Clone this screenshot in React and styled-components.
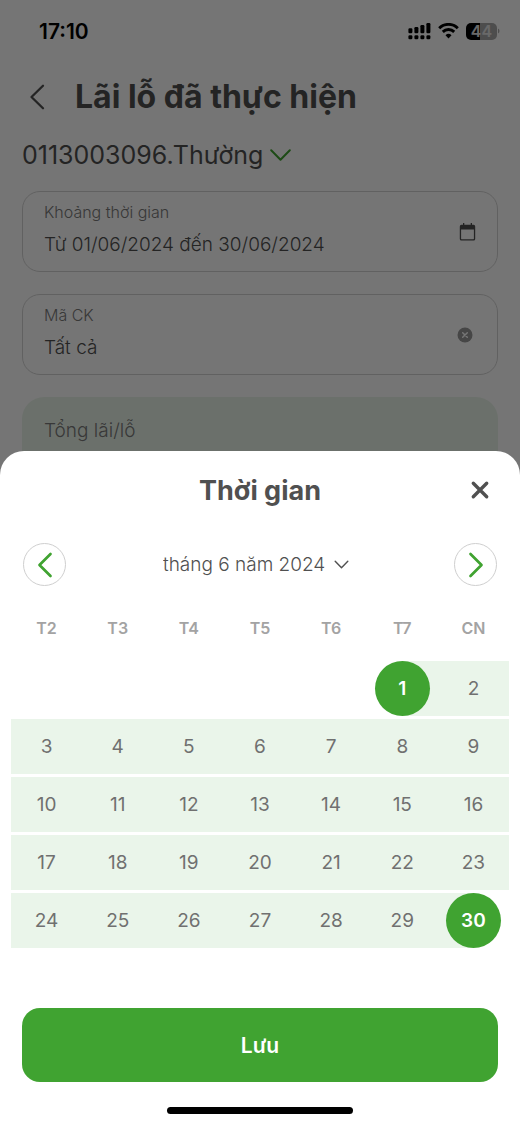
import React, { useState } from "react";
import styled, { createGlobalStyle, css, ThemeProvider } from "styled-components";

const theme = {
  colors: {
    green: "#40a331",
    range: "#eaf5ea",
    text: "#505050",
    muted: "#7a7a7a",
    weekday: "#a3a3a3",
    border: "#d4d4d4",
  },
};

const GlobalStyle = createGlobalStyle`
  *, *::before, *::after {
    box-sizing: border-box;
  }
  body {
    margin: 0;
    background: #fff;
    color: #505050;
    font-family: Inter, "Liberation Sans", sans-serif;
  }
  button, input, select {
    margin: 0;
    padding: 0;
    border: none;
    background: none;
    color: inherit;
    font: inherit;
    outline: none;
  }
  button, select {
    cursor: pointer;
  }
  svg {
    display: block;
    flex-shrink: 0;
  }
`;

const Page = styled.div`
  min-height: 100vh;
`;

const StatusBar = styled.div`
  display: flex;
  align-items: center;
  justify-content: space-between;
  height: 62px;
  padding: 0 20px 0 39px;
  color: #000;
`;

const Time = styled.time`
  font-size: 21px;
  font-weight: 600;
`;

const StatusIcons = styled.div`
  display: flex;
  align-items: center;
  gap: 7px;
`;

const TopBar = styled.header`
  display: flex;
  align-items: center;
  gap: 28px;
  height: 70px;
  padding: 0 28px;
`;

const Title = styled.h1`
  margin: 0;
  font-size: 32px;
  font-weight: 700;
  line-height: 40px;
`;

const Content = styled.main`
  display: flex;
  flex-direction: column;
  gap: 22px;
  padding: 9px 22px 0;
`;

const AccountPicker = styled.label`
  display: flex;
  align-items: center;
  gap: 6px;
  height: 28px;
  color: ${({ theme }) => theme.colors.green};
`;

const PlainSelect = styled.select`
  appearance: none;
  color: ${({ theme }) => theme.colors.text};
  font-size: ${({ $size }) => $size}px;
  font-weight: ${({ $weight }) => $weight};
  line-height: 32px;
`;

const Field = styled.div`
  display: flex;
  align-items: center;
  justify-content: space-between;
  height: 81px;
  padding: 0 21px;
  border: 1px solid ${({ theme }) => theme.colors.border};
  border-radius: 18px;
`;

const FieldBody = styled.div`
  display: flex;
  flex: 1;
  flex-direction: column;
  gap: 11px;
  padding-bottom: 5px;
`;

const FieldLabel = styled.label`
  color: ${({ theme }) => theme.colors.muted};
  font-size: 16px;
  font-weight: 300;
  line-height: 20px;
`;

const FieldInput = styled.input`
  width: 100%;
  height: 24px;
  font-size: 19px;
  font-weight: 300;
`;

const IconButton = styled.button`
  display: flex;
  align-items: center;
  justify-content: center;
`;

const Summary = styled.section`
  min-height: 140px;
  padding: 21px 22px;
  border-radius: 22px;
  background: ${({ theme }) => theme.colors.range};
  color: ${({ theme }) => theme.colors.muted};
  font-size: 19px;
  font-weight: 300;
  line-height: 26px;
`;

const Backdrop = styled.div`
  position: fixed;
  inset: 0;
  display: flex;
  align-items: flex-end;
  background: rgba(0, 0, 0, 0.54);
`;

const Sheet = styled.section`
  width: 100%;
  border-radius: 24px 24px 0 0;
  background: #fff;
`;

const SheetHeader = styled.div`
  display: grid;
  grid-template-columns: 1fr auto 1fr;
  align-items: center;
  height: 78px;
  padding: 0 30px;
`;

const SheetTitle = styled.h2`
  grid-column: 2;
  margin: 0;
  font-size: 27px;
  font-weight: 700;
`;

const CloseButton = styled(IconButton)`
  justify-self: end;
`;

const MonthNav = styled.div`
  display: flex;
  align-items: center;
  justify-content: space-between;
  padding: 14px 23px 0;
`;

const RoundButton = styled(IconButton)`
  width: 43px;
  height: 43px;
  border: 1px solid #cfcfcf;
  border-radius: 50%;
  color: ${({ theme }) => theme.colors.green};
`;

const MonthPicker = styled.label`
  display: flex;
  align-items: center;
  gap: 8px;
  padding-right: 8px;
`;

const Calendar = styled.table`
  width: calc(100% - 22px);
  margin: 15px 11px 0;
  border-collapse: separate;
  border-spacing: 0 3px;
  table-layout: fixed;
`;

const Weekday = styled.th`
  height: 54px;
  padding: 0 0 6px;
  color: ${({ theme }) => theme.colors.weekday};
  font-size: 16px;
  font-weight: 600;
`;

const rangeFill = {
  start: css`
    background: linear-gradient(to right, transparent 50%, ${({ theme }) => theme.colors.range} 50%);
  `,
  end: css`
    background: linear-gradient(to left, transparent 50%, ${({ theme }) => theme.colors.range} 50%);
  `,
  middle: css`
    background: ${({ theme }) => theme.colors.range};
  `,
};

const DayCell = styled.td`
  height: 55px;
  padding: 0;
  text-align: center;
  ${({ $range }) => rangeFill[$range]}
`;

const Day = styled.button`
  width: 55px;
  height: 55px;
  border-radius: 50%;
  vertical-align: top;
  font-size: 19px;
  color: #707070;
  ${({ $selected }) =>
    $selected &&
    css`
      background: ${({ theme }) => theme.colors.green};
      color: #fff;
      font-weight: 600;
    `}
`;

const SheetFooter = styled.div`
  display: flex;
  flex-direction: column;
  align-items: center;
  padding: 57px 22px 11px;
`;

const SaveButton = styled.button`
  width: 100%;
  height: 74px;
  border-radius: 18px;
  background: ${({ theme }) => theme.colors.green};
  color: #fff;
  font-size: 21px;
  font-weight: 600;
`;

const HomeIndicator = styled.div`
  width: 186px;
  height: 7px;
  margin-top: 25px;
  border-radius: 4px;
  background: #000;
`;

const BatteryLevel = styled.div`
  display: flex;
  align-items: center;
`;

const BatteryBody = styled.div`
  width: 31px;
  height: 17px;
  border-radius: 5px;
  background: linear-gradient(to right, #000 45%, #a8a8a8 45%);
  color: #e4e4e4;
  font-size: 16px;
  font-weight: 600;
  line-height: 17px;
  text-align: center;
`;

const SignalIcon = () => (
  <svg width="23" height="17" viewBox="0 0 23 17" fill="currentColor">
    <rect x="0.4" y="5.2" width="4" height="5" rx="1.2" />
    <rect x="6.4" y="4" width="4" height="6.2" rx="1.2" />
    <rect x="12.4" y="2" width="4" height="8.2" rx="1.2" />
    <rect x="18.4" y="0" width="4" height="10.2" rx="1.2" />
    <rect x="0.4" y="12.2" width="4" height="4" rx="1.3" />
    <rect x="6.4" y="12.2" width="4" height="4" rx="1.3" />
    <rect x="12.4" y="12.2" width="4" height="4" rx="1.3" />
    <rect x="18.4" y="12.2" width="4" height="4" rx="1.3" />
  </svg>
);

const WifiIcon = () => (
  <svg width="21" height="16" viewBox="0 0 21 16" fill="none" stroke="currentColor" strokeWidth="2.9">
    <path d="M1.2 5.2a13.2 13.2 0 0 1 18.6 0" />
    <path d="M4.8 8.9a8.1 8.1 0 0 1 11.4 0" />
    <path d="M10.5 15.4 7.5 12.3a4.3 4.3 0 0 1 6 0z" fill="currentColor" stroke="none" />
  </svg>
);

const BatteryCap = () => (
  <svg width="3" height="6" viewBox="0 0 3 6" fill="#a8a8a8">
    <path d="M1 0.4a3 3 0 0 1 0 5.2z" />
  </svg>
);

const BackIcon = () => (
  <svg width="19" height="26" viewBox="0 0 19 26" fill="none" stroke="currentColor" strokeWidth="2.3" strokeLinecap="round" strokeLinejoin="round">
    <path d="M15 1.7 3.500 13 15 24.300" />
  </svg>
);

const ChevronDown = ({ width, height, strokeWidth }) => (
  <svg width={width} height={height} viewBox={`0 0 ${width} ${height}`} fill="none" stroke="currentColor" strokeWidth={strokeWidth} strokeLinecap="round" strokeLinejoin="round">
    <path d={`M1.2 1.2 ${width / 2} ${height - 1.2} ${width - 1.2} 1.2`} />
  </svg>
);

const CalendarIcon = () => (
  <svg width="17" height="18" viewBox="0 0 17 18" fill="currentColor">
    <path d="M4 0h1.300v1.800h6.400V0H13v1.800h1.600A1.600 1.600 0 0 1 16.200 3.400V15.900a1.600 1.600 0 0 1-1.600 1.600H2.400A1.600 1.600 0 0 1 .8 15.900V3.400A1.600 1.600 0 0 1 2.400 1.800H4zM2.100 6.500v9.200c0 .3.200.5.500.5h11.800c.3 0 .5-.2.500-.5V6.500z" />
  </svg>
);

const ClearIcon = () => (
  <svg width="21" height="16" viewBox="0 0 21 16">
    <circle cx="10" cy="8" r="7.500" fill="#989898" />
    <path d="m7.700 5.700 4.600 4.600m0-4.600-4.600 4.600" stroke="#fff" strokeWidth="1.500" strokeLinecap="round" />
  </svg>
);

const CloseIcon = () => (
  <svg width="20" height="20" viewBox="0 0 20 20" fill="none" stroke="currentColor" strokeWidth="3.400" strokeLinecap="round">
    <path d="m3.300 3.300 13.400 13.400m0-13.400L3.300 16.700" />
  </svg>
);

const Arrow = ({ d }) => (
  <svg width="24" height="26" viewBox="0 0 24 26" fill="none" stroke="currentColor" strokeWidth="2.700" strokeLinecap="round" strokeLinejoin="round">
    <path d={d} />
  </svg>
);

const WEEKDAYS = ["T2", "T3", "T4", "T5", "T6", "T7", "CN"];
const FIRST = 1;
const LAST = 30;
const OFFSET = 5;

// five rows of seven days, Monday first
const weeks = Array.from({ length: 5 }, (_, row) =>
  WEEKDAYS.map((_, col) => {
    const day = row * 7 + col - OFFSET + 1;
    return day >= FIRST && day <= LAST ? day : null;
  })
);

const rangeOf = (day, range) => {
  if (!day || day < range.from || day > range.to) return undefined;
  if (day === range.from) return "start";
  if (day === range.to) return "end";
  return "middle";
};

const App = () => {
  const [range, setRange] = useState({ from: FIRST, to: LAST });

  const pick = (day) =>
    setRange(({ from }) => (day > from ? { from, to: day } : { from: day, to: LAST }));

  return (
    <ThemeProvider theme={theme}>
      <GlobalStyle />
      <Page>
        <StatusBar>
          <Time>17:10</Time>
          <StatusIcons>
            <SignalIcon />
            <WifiIcon />
            <BatteryLevel>
              <BatteryBody>44</BatteryBody>
              <BatteryCap />
            </BatteryLevel>
          </StatusIcons>
        </StatusBar>
        <TopBar>
          <IconButton type="button" aria-label="Quay lại">
            <BackIcon />
          </IconButton>
          <Title>Lãi lỗ đã thực hiện</Title>
        </TopBar>
        <Content>
          <AccountPicker>
            <PlainSelect $size={25} $weight={400} aria-label="Tài khoản">
              <option>0113003096.Thường</option>
            </PlainSelect>
            <ChevronDown width={21} height={12} strokeWidth={2} />
          </AccountPicker>
          <Field>
            <FieldBody>
              <FieldLabel htmlFor="period">Khoảng thời gian</FieldLabel>
              <FieldInput id="period" readOnly value="Từ 01/06/2024 đến 30/06/2024" />
            </FieldBody>
            <IconButton type="button" aria-label="Chọn thời gian">
              <CalendarIcon />
            </IconButton>
          </Field>
          <Field>
            <FieldBody>
              <FieldLabel htmlFor="symbol">Mã CK</FieldLabel>
              <FieldInput id="symbol" defaultValue="Tất cả" />
            </FieldBody>
            <IconButton type="button" aria-label="Xóa">
              <ClearIcon />
            </IconButton>
          </Field>
          <Summary>Tổng lãi/lỗ</Summary>
        </Content>
      </Page>
      <Backdrop>
        <Sheet role="dialog" aria-labelledby="sheet-title">
          <SheetHeader>
            <SheetTitle id="sheet-title">Thời gian</SheetTitle>
            <CloseButton type="button" aria-label="Đóng">
              <CloseIcon />
            </CloseButton>
          </SheetHeader>
          <MonthNav>
            <RoundButton type="button" aria-label="Tháng trước">
              <Arrow d="M17.500 2 6.500 13 17.500 24" />
            </RoundButton>
            <MonthPicker>
              <PlainSelect $size={19} $weight={300} aria-label="Tháng">
                <option>tháng 6 năm 2024</option>
              </PlainSelect>
              <ChevronDown width={15} height={9} strokeWidth={1.4} />
            </MonthPicker>
            <RoundButton type="button" aria-label="Tháng sau">
              <Arrow d="M6.500 2 17.500 13 6.500 24" />
            </RoundButton>
          </MonthNav>
          <Calendar>
            <thead>
              <tr>
                {WEEKDAYS.map((name) => (
                  <Weekday key={name} scope="col">{name}</Weekday>
                ))}
              </tr>
            </thead>
            <tbody>
              {weeks.map((week, row) => (
                <tr key={row}>
                  {week.map((day, col) => (
                    <DayCell key={col} $range={rangeOf(day, range)}>
                      {day && (
                        <Day
                          type="button"
                          $selected={day === range.from || day === range.to}
                          onClick={() => pick(day)}
                        >
                          {day}
                        </Day>
                      )}
                    </DayCell>
                  ))}
                </tr>
              ))}
            </tbody>
          </Calendar>
          <SheetFooter>
            <SaveButton type="button">Lưu</SaveButton>
            <HomeIndicator />
          </SheetFooter>
        </Sheet>
      </Backdrop>
    </ThemeProvider>
  );
};

export default App;
